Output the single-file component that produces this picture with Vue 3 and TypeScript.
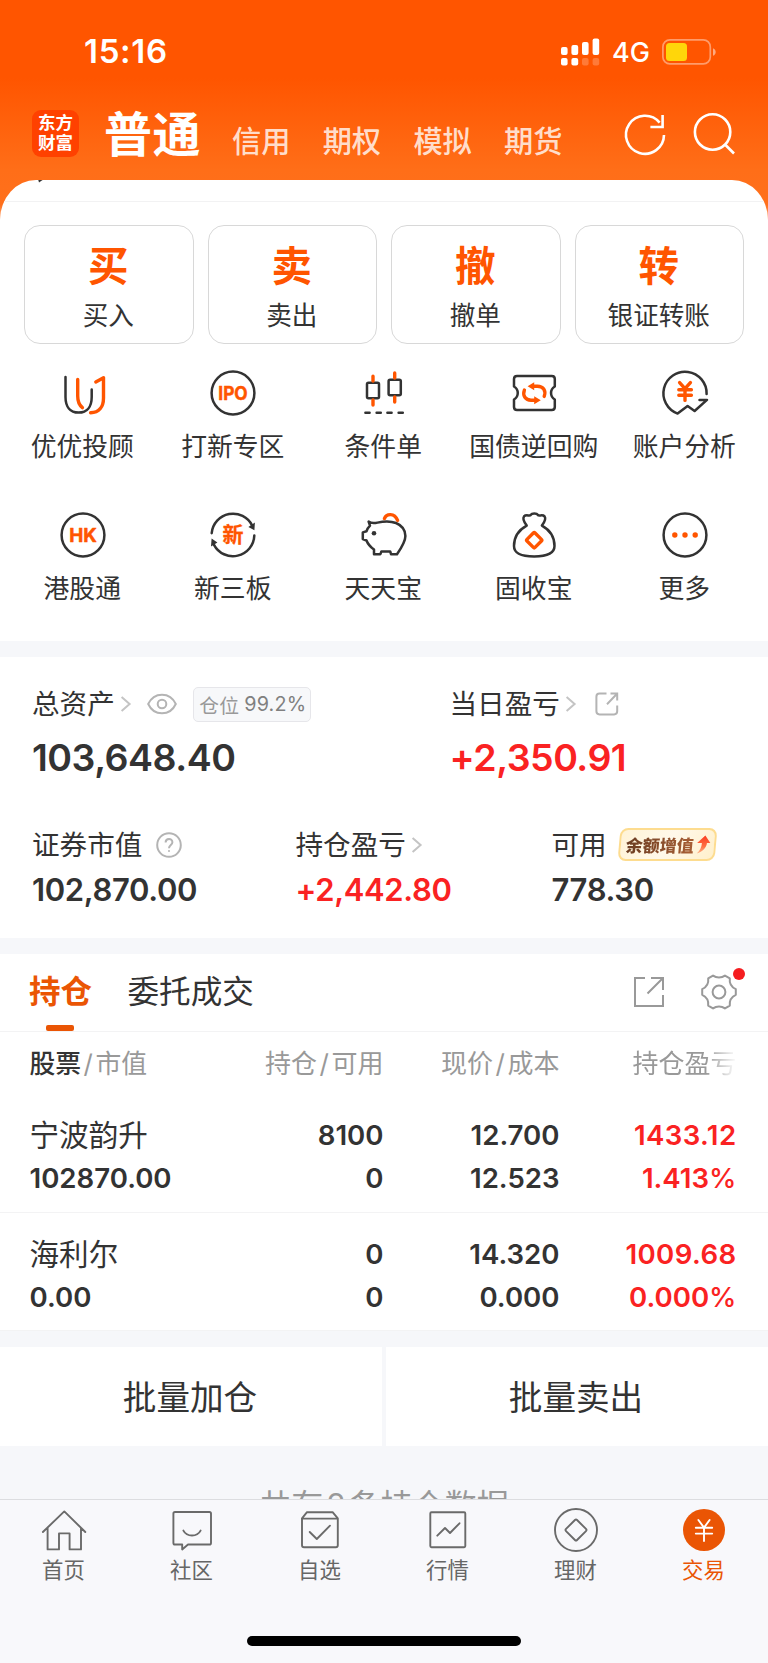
<script setup lang="ts">
interface Action {
  glyph: string
  label: string
}
interface Shortcut {
  key: string
  label: string
}
interface Holding {
  name: string
  value: string
  held: string
  usable: string
  price: string
  cost: string
  profit: string
  rate: string
}

const markets: string[] = ['信用', '期权', '模拟', '期货']

const actions: Action[] = [
  { glyph: '买', label: '买入' },
  { glyph: '卖', label: '卖出' },
  { glyph: '撤', label: '撤单' },
  { glyph: '转', label: '银证转账' },
]

const shortcuts: Shortcut[] = [
  { key: 'advisor', label: '优优投顾' },
  { key: 'ipo', label: '打新专区' },
  { key: 'condition', label: '条件单' },
  { key: 'repo', label: '国债逆回购' },
  { key: 'analysis', label: '账户分析' },
  { key: 'hk', label: '港股通' },
  { key: 'neeq', label: '新三板' },
  { key: 'piggy', label: '天天宝' },
  { key: 'bag', label: '固收宝' },
  { key: 'more', label: '更多' },
]

const holdings: Holding[] = [
  { name: '宁波韵升', value: '102870.00', held: '8100', usable: '0', price: '12.700', cost: '12.523', profit: '1433.12', rate: '1.413' },
  { name: '海利尔', value: '0.00', held: '0', usable: '0', price: '14.320', cost: '0.000', profit: '1009.68', rate: '0.000' },
]

const tabs: Shortcut[] = [
  { key: 'home', label: '首页' },
  { key: 'community', label: '社区' },
  { key: 'watch', label: '自选' },
  { key: 'quotes', label: '行情' },
  { key: 'wealth', label: '理财' },
  { key: 'trade', label: '交易' },
]
</script>

<template>
  <div class="screen">
    <header class="top">
      <div class="status">
        <span class="time">15:16</span>
        <div class="status-right">
          <svg class="signal" width="39" height="28" viewBox="0 0 39 28" fill="#fff">
            <rect x="0" y="9" width="6.6" height="8" rx="2" />
            <rect x="10.4" y="7" width="6.8" height="10" rx="2" />
            <rect x="21" y="4" width="6.6" height="13" rx="2" />
            <rect x="31.6" y="0.5" width="6.6" height="16.5" rx="2" />
            <rect x="0" y="20" width="6.6" height="7.6" rx="2" />
            <rect x="10.4" y="20" width="6.8" height="7.6" rx="2" />
            <rect x="21" y="20" width="6.6" height="7.6" rx="2" opacity="0.22" />
            <rect x="31.6" y="20" width="6.6" height="7.6" rx="2" opacity="0.22" />
          </svg>
          <span class="network">4G</span>
          <svg class="battery" width="55" height="26" viewBox="0 0 55 26">
            <rect x="0.9" y="0.9" width="47.4" height="24" rx="7" fill="none" stroke="#fff" stroke-opacity="0.42" stroke-width="1.7" />
            <rect x="4" y="4" width="21" height="18" rx="3.5" fill="#ffd60a" />
            <path d="M51 9.2C54.6 10.5 54.6 15.5 51 16.8Z" fill="#fff" fill-opacity="0.5" />
          </svg>
        </div>
      </div>
      <nav class="nav">
        <div class="logo"><span>东方</span><span>财富</span></div>
        <span class="current">普通</span>
        <span v-for="m in markets" :key="m" class="market">{{ m }}</span>
        <svg class="nav-icons" width="120" height="50" viewBox="0 0 120 50" fill="none" stroke="#fff" stroke-width="2.6">
          <path d="M43 26A19 19 0 1 1 38.6 13.6" />
          <path d="M41.6 6V18H29.4" />
          <circle cx="91.6" cy="23" r="17.7" />
          <path d="M104 35.5L113 44.5" />
        </svg>
      </nav>
    </header>

    <section class="panel">
      <svg class="residue" width="5" height="3" viewBox="0 0 5 3"><path d="M0.3 0H4.6L1 2.6Z" fill="#333" /></svg>
      <div class="rule"></div>
      <div class="actions">
        <div v-for="a in actions" :key="a.label" class="action">
          <strong>{{ a.glyph }}</strong>
          <span>{{ a.label }}</span>
        </div>
      </div>
      <div class="shortcuts">
        <div v-for="s in shortcuts" :key="s.key" class="shortcut">
          <svg class="sicon" width="50" height="50" viewBox="0 0 50 50">
            <template v-if="s.key === 'advisor'">
              <path class="dk" d="M7.5 9V29C7.5 38.5 12 44.6 20.6 44.6S33.7 38.5 33.7 29V21.5" />
              <path class="or" d="M19.7 11.5V28C19.7 33.5 21 37 24.4 39.6" />
              <path class="or" d="M37.8 14L45.5 9.7V30C45.5 39 41 44.5 32.6 44.8" />
            </template>
            <template v-else-if="s.key === 'ipo'">
              <circle class="dk" cx="25" cy="25" r="21.4" />
              <text class="gl" x="25" y="31.8" font-size="18.8" textLength="29.4" lengthAdjust="spacingAndGlyphs">IPO</text>
            </template>
            <template v-else-if="s.key === 'condition'">
              <rect class="dk" x="8" y="14.8" width="12" height="15.4" rx="1.5" />
              <path class="or" d="M14 8.2V13M14 32V37" />
              <rect class="dk" x="29.6" y="11.8" width="12.2" height="15.4" rx="1.5" />
              <path class="or" d="M35.7 5V10M35.7 29V34" />
              <path class="dk" d="M6.4 44.8H10.6M17.6 44.8H21.8M28.4 44.8H32.6M39.6 44.8H43.8" />
            </template>
            <template v-else-if="s.key === 'repo'">
              <path class="dk" d="M8 8H42.8Q45.8 8 45.8 11V18.5C40.8 21.5 40.8 28.5 45.8 31.5V39Q45.8 42 42.8 42H8Q5 42 5 39V31.5C10 28.5 10 21.5 5 18.5V11Q5 8 8 8Z" />
              <path class="or" d="M35.2 28.4C37.4 22.5 34 18.2 28.5 18.2H24M15.4 22C13.2 27.9 16.6 32.2 22 32.2H26.5" />
              <path class="of" d="M18.6 18.2L25.2 14.2V22.2ZM31.8 32.2L25.2 28.2V36.2Z" />
            </template>
            <template v-else-if="s.key === 'analysis'">
              <path class="dk" d="M46.6 26A21.6 21.6 0 1 0 17.6 45.6L27.6 38L34.6 43L47 31.9H39.5" />
              <path class="or" d="M19.6 14.6L25 20.6L30.4 14.6M25 20.6V32.4M18.8 21.8H31.4M18.8 27.2H31.4" />
            </template>
            <template v-else-if="s.key === 'hk'">
              <circle class="dk" cx="25" cy="25" r="21.4" />
              <text class="gl" x="25" y="31.8" font-size="18.8" textLength="27.6" lengthAdjust="spacingAndGlyphs">HK</text>
            </template>
            <template v-else-if="s.key === 'neeq'">
              <path class="dk" d="M3.7 23.2A21.4 21.4 0 0 1 44.2 15.6M46.3 25.6A21.4 21.4 0 0 1 6 34.8" />
              <path class="df" d="M46.4 20.2L46.9 12.6L40.4 17ZM3.6 28.4L3 36.4L9.4 32.4Z" />
              <text class="gl cjk" x="25" y="32.4" font-size="21">新</text>
            </template>
            <template v-else-if="s.key === 'piggy'">
              <path class="dk" d="M9.6 11.6C12 13.4 15 13.4 18.5 12.6C26 10.8 33 11.4 37 13C43 15.5 46.4 20 46.4 26C46.4 31 43 37 38 44.2H32L31.2 41.4H22.4L21.4 44.2H15V39.6C11.5 37 9 34.5 7.5 30.5L3.8 29V22.4L7.5 21.2C8.3 19 9.5 17.2 11 15.7Z" />
              <circle cx="15" cy="23.2" r="2.3" fill="#333" />
              <path class="or" d="M25.4 8.6C27.4 3.4 35.4 2.6 38.6 10.4" />
            </template>
            <template v-else-if="s.key === 'bag'">
              <path class="dk" d="M17.7 15.6C15.4 12.4 13 9 15 6.4C16.8 4.4 19.4 5.9 21.2 5.4C23.2 3 27.4 3 29.4 5.4C31.2 5.9 33.8 4.4 35.6 6.4C37.6 9 35.2 12.4 32.9 15.6C41 20 45.5 27 45.5 36C45.5 44 38 46.4 25.2 46.4S5 44 5 36C5 27 9.6 20 17.7 15.6Z" />
              <rect class="or" x="19.5" y="24.5" width="11.4" height="11.4" rx="1.2" transform="rotate(45 25.2 30.2)" />
            </template>
            <template v-else>
              <circle class="dk" cx="25" cy="25" r="21.4" />
              <circle cx="14.8" cy="25" r="2.7" fill="#ff5500" />
              <circle cx="25" cy="25" r="2.7" fill="#ff5500" />
              <circle cx="35.2" cy="25" r="2.7" fill="#ff5500" />
            </template>
          </svg>
          <span>{{ s.label }}</span>
        </div>
      </div>
    </section>

    <section class="assets">
      <div class="totals">
        <div>
          <div class="label">
            <span class="cap">总资产</span>
            <svg class="chev" width="12" height="16" viewBox="0 0 12 16"><path d="M1.6 1L9.6 8L1.6 15" /></svg>
            <svg class="eye" width="30" height="22" viewBox="0 0 30 22">
              <path d="M1.2 11C7 -1.4 23 -1.4 28.8 11C23 23.4 7 23.4 1.2 11Z" />
              <circle cx="15" cy="11" r="4.3" />
            </svg>
            <span class="ratio"><i>仓位</i>99.2%</span>
          </div>
          <div class="big">103,648.40</div>
        </div>
        <div>
          <div class="label">
            <span class="cap">当日盈亏</span>
            <svg class="chev" width="12" height="16" viewBox="0 0 12 16"><path d="M1.6 1L9.6 8L1.6 15" /></svg>
            <svg class="share-s" width="24" height="24" viewBox="0 0 24 24">
              <path d="M11.5 1.6H4.5Q1.4 1.6 1.4 4.7V19.3Q1.4 22.4 4.5 22.4H19.1Q22.2 22.4 22.2 19.3V13.5M15.5 1.6H22.2V8.6M22 1.8L12 12.2" />
            </svg>
          </div>
          <div class="big red">+2,350.91</div>
        </div>
      </div>
      <div class="details">
        <div>
          <div class="label">
            <span class="cap">证券市值</span>
            <svg class="help" width="26" height="26" viewBox="0 0 26 26">
              <circle cx="13" cy="13" r="11.8" />
              <path d="M9.6 10.4C9.6 5.8 16.4 5.8 16.4 10.2C16.4 13 13 13 13 16.2M13 18.2V19.8" />
            </svg>
          </div>
          <div class="mid">102,870.00</div>
        </div>
        <div>
          <div class="label">
            <span class="cap">持仓盈亏</span>
            <svg class="chev" width="12" height="16" viewBox="0 0 12 16"><path d="M1.6 1L9.6 8L1.6 15" /></svg>
          </div>
          <div class="mid red">+2,442.80</div>
        </div>
        <div>
          <div class="label">
            <span class="cap">可用</span>
            <span class="promo">
              <b>余额增值</b>
              <svg width="15" height="19" viewBox="0 0 15 19">
                <defs>
                  <linearGradient id="rise" x1="0" y1="0" x2="0" y2="1">
                    <stop offset="0" stop-color="#fa3c20" />
                    <stop offset="0.6" stop-color="#ff7042" />
                    <stop offset="1" stop-color="#ffb489" />
                  </linearGradient>
                </defs>
                <path d="M8.6 0.5L14.2 8H10.8C10.8 12.5 7.5 16.8 1.5 18.5C4.6 15.5 5.8 12 5.8 8H1Z" fill="url(#rise)" />
              </svg>
            </span>
          </div>
          <div class="mid">778.30</div>
        </div>
      </div>
    </section>

    <section class="positions">
      <div class="switch">
        <span class="on">持仓</span>
        <span class="off">委托成交</span>
        <svg class="share-l" width="32" height="32" viewBox="0 0 32 32">
          <path d="M12 2H2V30H30V19M18 2H30V14M30 2L14.5 17.5" />
        </svg>
        <span class="gear">
          <svg width="36" height="36" viewBox="0 0 36 36">
            <path d="M12 1.6C15.5 4.2 20.5 4.2 24 1.6L28.8 4.4C28.2 9.4 30.6 13.2 34.8 15.2V20.8C30.6 22.8 28.2 26.6 28.8 31.6L24 34.4C20.5 31.8 15.5 31.8 12 34.4L7.2 31.6C7.8 26.6 5.4 22.8 1.2 20.8V15.2C5.4 13.2 7.8 9.4 7.2 4.4Z" />
            <circle cx="18" cy="18" r="6.4" />
          </svg>
          <i></i>
        </span>
      </div>
      <div class="row head">
        <div class="lead"><b>股票</b><em>/</em>市值</div>
        <div>持仓<em>/</em>可用</div>
        <div>现价<em>/</em>成本</div>
        <div class="fade">持仓盈亏</div>
      </div>
      <div v-for="h in holdings" :key="h.name" class="row data">
        <div><span class="name">{{ h.name }}</span><span>{{ h.value }}</span></div>
        <div><span>{{ h.held }}</span><span>{{ h.usable }}</span></div>
        <div><span>{{ h.price }}</span><span>{{ h.cost }}</span></div>
        <div class="red"><span class="profit">{{ h.profit }}</span><span>{{ h.rate }}<small>%</small></span></div>
      </div>
    </section>

    <div class="batch">
      <button type="button">批量加仓</button>
      <button type="button">批量卖出</button>
    </div>
    <div class="count">共有<span>2</span>条持仓数据</div>

    <footer class="tabbar">
      <div class="tabs">
        <div v-for="t in tabs" :key="t.key" class="tab" :class="{ active: t.key === 'trade' }">
          <svg width="48" height="48" viewBox="0 0 48 48">
            <path v-if="t.key === 'home'" d="M2.9 26L24.3 5.4L45.3 26M7.6 22V43.4H19V27.4H29.6V43.4H41V22" />
            <template v-else-if="t.key === 'community'">
              <path d="M7 6H41.4Q43 6 43 7.6V36.9Q43 38.5 41.4 38.5H20L14.2 43.4V38.5H7Q5.4 38.5 5.4 36.9V7.6Q5.4 6 7 6Z" />
              <path d="M15.4 24.6C19 31.2 29 31.2 32.6 24.6" />
            </template>
            <template v-else-if="t.key === 'watch'">
              <path d="M6 12.4L11 6.2H36.6L41.8 12.4V39.3Q41.8 41.3 39.8 41.3H8Q6 41.3 6 39.3V12.4M6 12.6H41.8" />
              <path d="M13.7 26L20.8 33L34 19.7" />
            </template>
            <template v-else-if="t.key === 'quotes'">
              <rect x="6.3" y="6.2" width="35" height="35" rx="1.2" />
              <path d="M13.3 29.7L21 22L26 27L35.5 17.3" />
            </template>
            <template v-else-if="t.key === 'wealth'">
              <circle cx="24" cy="24" r="21" />
              <rect x="16.2" y="16.2" width="15.6" height="15.6" rx="1.5" transform="rotate(45 24 24)" />
            </template>
            <template v-else>
              <circle class="disc" cx="24" cy="24" r="21" />
              <path class="yen" d="M18.4 14L24 21.6L29.6 14M24 21.6V35M15.8 21.8H32.2M15.8 27.6H32.2" />
            </template>
          </svg>
          <span>{{ t.label }}</span>
        </div>
      </div>
      <div class="indicator"></div>
    </footer>
  </div>
</template>

<style>
body {
  margin: 0;
  background: #f6f7f9;
}
</style>

<style scoped>
* {
  box-sizing: border-box;
}
.screen {
  width: 768px;
  height: 1663px;
  overflow: hidden;
  display: flex;
  flex-direction: column;
  background: #f6f7fa;
  color: #333;
  font-family: Inter, "Noto Sans CJK SC", sans-serif;
  white-space: nowrap;
}
.red {
  color: #fa2222;
}

/* header */
.top {
  height: 222px;
  flex: none;
  background: linear-gradient(#ff5500 0, #ff5500 78px, #ff6e18 170px, #ff701c 205px, #ffb890 222px);
  color: #fff;
}
.status {
  height: 103px;
  display: flex;
  align-items: center;
  justify-content: space-between;
  padding: 0 51px 0 84px;
}
.time {
  margin-top: -1px;
  font-size: 33px;
  font-weight: 600;
  letter-spacing: 0.7px;
}
.status-right {
  display: flex;
  align-items: center;
}
.network {
  font-size: 27px;
  font-weight: 500;
  margin: 1px 12px 0 12px;
}
.nav {
  height: 60px;
  display: flex;
  align-items: center;
  padding-left: 32px;
}
.logo {
  width: 47px;
  height: 47px;
  border-radius: 9px;
  background: #ff4100;
  display: flex;
  flex-direction: column;
  align-items: center;
  justify-content: center;
  font-size: 17.5px;
  line-height: 20px;
  font-weight: 700;
}
.current {
  margin-left: 25px;
  width: 128px;
  padding-top: 2px;
  font-size: 48px;
  line-height: 57px;
  font-weight: 700;
  letter-spacing: 0.5px;
}
.market {
  width: 90.7px;
  padding-top: 17px;
  font-size: 29.2px;
  line-height: 45px;
  font-weight: 500;
  color: rgba(255, 255, 255, 0.8);
}
.nav-icons {
  margin: 1px 0 0 26px;
}

/* main panel */
.panel {
  position: relative;
  margin-top: -42.5px;
  height: 461.5px;
  flex: none;
  overflow: hidden;
  background: #fff;
  border-radius: 36px 36px 0 0 / 40px 40px 0 0;
}
.residue {
  position: absolute;
  left: 38px;
  top: 0;
}
.rule {
  height: 22px;
  border-bottom: 1.5px solid #f2f2f3;
}
.actions {
  display: grid;
  grid-template-columns: repeat(4, 1fr);
  gap: 14px;
  padding: 23px 24px 0;
}
.action {
  height: 119px;
  border: 1.4px solid #d8d8d8;
  border-radius: 16px;
  display: flex;
  flex-direction: column;
  align-items: center;
  padding: 18px 1px 0 0;
}
.action strong {
  font-size: 40.5px;
  line-height: 46px;
  color: #ff5500;
}
.action span {
  margin-top: 9px;
  font-size: 25.6px;
  line-height: 34px;
}
.shortcuts {
  display: grid;
  grid-template-columns: repeat(5, 150.5px);
  padding: 24px 0 0 7.5px;
}
.shortcut {
  height: 142px;
  display: flex;
  flex-direction: column;
  align-items: center;
}
.sicon {
  overflow: visible;
}
.shortcut span {
  margin-top: 12.5px;
  padding-right: 1px;
  font-size: 25.8px;
  line-height: 34px;
}
.dk,
.or {
  fill: none;
  stroke: #333;
  stroke-width: 2.5;
  stroke-linecap: round;
  stroke-linejoin: round;
}
.or {
  stroke: #ff5500;
  stroke-width: 3.4;
}
.df {
  fill: #333;
}
.of {
  fill: #ff5500;
}
.gl {
  fill: #ff5500;
  stroke: #ff5500;
  stroke-width: 0.5;
  stroke-linejoin: round;
  font-weight: 700;
  text-anchor: middle;
}
.cjk {
  font-family: "Noto Sans CJK SC", sans-serif;
  font-weight: 700;
  stroke-width: 0.3;
}

/* assets */
.assets {
  margin-top: 16px;
  height: 281px;
  flex: none;
  background: #fff;
}
.totals,
.details {
  display: grid;
  padding-left: 32px;
}
.totals {
  grid-template-columns: 417.5px 1fr;
  padding-top: 29px;
  height: 170px;
}
.details {
  grid-template-columns: 263.5px 256px 1fr;
}
.label {
  height: 36px;
  display: flex;
  align-items: center;
  font-size: 27.6px;
}
.cap {
  line-height: 34px;
}
.label svg {
  fill: none;
  stroke: #b4b4b4;
  stroke-width: 2;
}
.label .chev {
  margin-left: 5px;
  stroke: #c4c4c4;
}
.eye {
  margin-left: 15px;
}
.ratio {
  margin-left: 16px;
  width: 118px;
  height: 35px;
  border: 1.4px solid #e6e6ea;
  border-radius: 5px;
  background: #f7f8fa;
  display: flex;
  align-items: center;
  justify-content: center;
  padding-left: 2px;
  font-size: 19.8px;
  letter-spacing: 0.2px;
  color: #808080;
}
.ratio i {
  font-style: normal;
  color: #999;
  margin-right: 5px;
}
.share-s {
  margin-left: 18px;
}
.help {
  margin-left: 14px;
}
.promo {
  margin: -2px 0 0 12px;
  width: 97px;
  height: 33px;
  border: 2px solid #fddc8f;
  border-radius: 8px;
  background: linear-gradient(120deg, #fff3d6, #fff9ea 50%, #fff0cc);
  transform: skewX(-5deg);
  display: flex;
  align-items: center;
  padding-left: 5px;
}
.promo b {
  font-size: 17px;
  font-weight: 900;
  background: linear-gradient(90deg, #6b3d22, #a85f35);
  -webkit-background-clip: text;
  background-clip: text;
  color: transparent;
}
.promo svg {
  margin-left: 2px;
  stroke: none;
}
.big {
  margin-top: 14px;
  font-size: 37.5px;
  line-height: 44px;
  font-weight: 600;
  letter-spacing: -0.5px;
}
.mid {
  margin-top: 7px;
  font-size: 31px;
  line-height: 40px;
  font-weight: 600;
  letter-spacing: -0.35px;
}

/* positions */
.positions {
  margin-top: 15.5px;
  flex: none;
  background: #fff;
}
.switch {
  height: 78.5px;
  border-bottom: 1.5px solid #f3f3f4;
  display: flex;
  align-items: center;
  padding-left: 29px;
}
.on {
  position: relative;
  font-size: 31.5px;
  line-height: 38px;
  font-weight: 700;
  color: #ea5504;
}
.on::after {
  content: "";
  position: absolute;
  left: 17px;
  bottom: -19.5px;
  width: 27.5px;
  height: 6px;
  border-radius: 2px;
  background: #ea5504;
}
.off {
  margin-left: 35.5px;
  font-size: 31.6px;
  line-height: 38px;
}
.share-l {
  margin-left: auto;
  fill: none;
  stroke: #999;
  stroke-width: 2;
}
.gear {
  position: relative;
  display: flex;
  margin: 0 31.5px 0 36px;
}
.gear svg {
  fill: none;
  stroke: #999;
  stroke-width: 2;
  stroke-linejoin: round;
}
.gear i {
  position: absolute;
  left: 32px;
  top: -6px;
  width: 12px;
  height: 12px;
  border-radius: 50%;
  background: #f51d20;
}
.row {
  display: grid;
  grid-template-columns: 206px 148px 176px 177px;
  padding-left: 29.5px;
  text-align: right;
}
.row > div:first-child {
  text-align: left;
}
.head {
  height: 62px;
  font-size: 26px;
  line-height: 64px;
  color: #999;
}
.head b {
  font-weight: 500;
  color: #333;
}
.head em {
  font-style: normal;
  margin: 0 2.5px;
}
.head .lead {
  font-size: 25.8px;
}
.head .lead em {
  margin: 0 2.5px;
}
.head .fade {
  justify-self: end;
  width: 104px;
  overflow: hidden;
  text-align: left;
  -webkit-mask-image: linear-gradient(90deg, #000 70%, transparent 100%);
  mask-image: linear-gradient(90deg, #000 70%, transparent 100%);
}
.data {
  height: 118.5px;
  padding-top: 20px;
  border-bottom: 1.5px solid #f3f3f4;
  font-size: 27.6px;
  line-height: 43px;
  font-weight: 600;
}
.data span {
  display: block;
}
.data .profit {
  letter-spacing: 0.4px;
}
.data .name {
  font-size: 29.6px;
  font-weight: 400;
}
.data small {
  font-size: inherit;
  font-weight: 500;
}

/* batch actions */
.batch {
  margin-top: 15.5px;
  display: grid;
  grid-template-columns: 1fr 1fr;
  gap: 4px;
}
.batch button {
  height: 99px;
  border: 0;
  padding: 0 2px 2px 0;
  background: #fff;
  color: #333;
  font: 400 33.6px Inter, "Noto Sans CJK SC", sans-serif;
}
.count {
  height: 53px;
  flex: none;
  overflow: hidden;
  padding-top: 40px;
  text-align: center;
  font-size: 32px;
  line-height: 40px;
  color: #999;
}
.count span {
  margin: 0 3px;
}

/* tab bar */
.tabbar {
  flex: 1;
  border-top: 1px solid #dcdde0;
  background: #f8f8fb;
  display: flex;
  flex-direction: column;
  align-items: center;
}
.tabs {
  display: grid;
  grid-template-columns: repeat(6, 128px);
  padding-top: 6px;
}
.tab {
  height: 130px;
  display: flex;
  flex-direction: column;
  align-items: center;
  font-size: 21.4px;
  color: #666;
}
.tab svg {
  fill: none;
  stroke: #6a6a6a;
  stroke-width: 1.9;
  stroke-linecap: round;
  stroke-linejoin: round;
}
.tab span {
  margin-top: 2.5px;
  padding-right: 1px;
  line-height: 28px;
}
.tab.active {
  color: #ea5504;
}
.tab .disc {
  fill: #ea5504;
  stroke: none;
}
.tab .yen {
  stroke: #fff;
}
.indicator {
  width: 274px;
  height: 10px;
  border-radius: 5px;
  background: #000;
}
</style>
